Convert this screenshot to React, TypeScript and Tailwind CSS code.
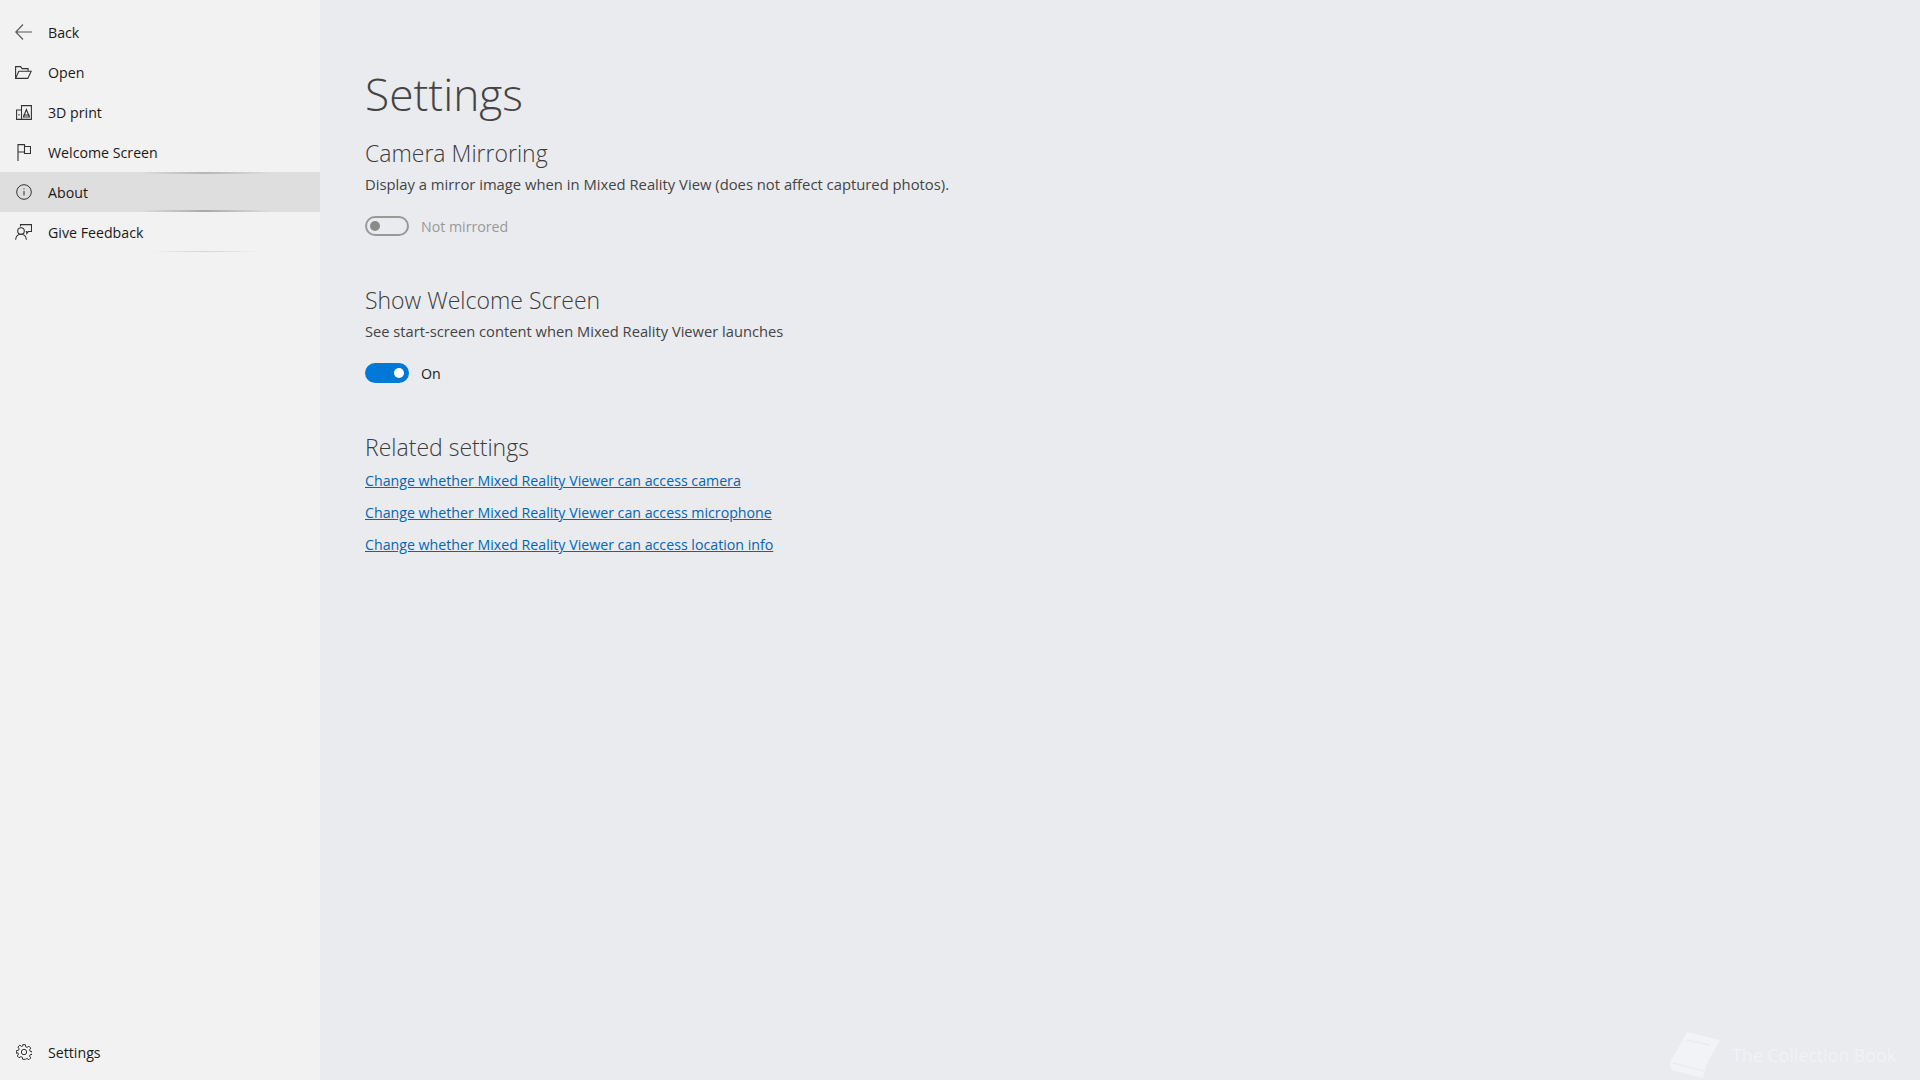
import React from "react";

const F = "font-['Open_Sans','Noto_Sans',sans-serif]";

const Back = () => (
  <svg width="18" height="16" viewBox="0 0 18 16" fill="none" stroke="#555" strokeWidth="1.1"><path d="M8 .5 .8 8 8 15.500M.8 8H17" /></svg>
);
const Open = () => (
  <svg width="17" height="13" viewBox="0 0 17 13" fill="none" stroke="#333" strokeWidth="1.1"><path d="M.6 12.400V.6h5l1.500 2h6v2.600M.6 12.400h12.200l3.400-7.200H3.800L.6 12.400Z" /></svg>
);
const Print = () => (
  <svg width="16" height="15" viewBox="0 0 16 15" fill="none" stroke="#333" strokeWidth="1.1"><path d="M5.500 5H.6v9.400h14.800V.6H5.500v13.800" /><path d="M10.400 4.500 7.400 12h6l-3-7.500Z" /><path d="M7.500 10h6" /><path d="M3 9v1.500" /></svg>
);
const Flag = () => (
  <svg width="14" height="17" viewBox="0 0 14 17" fill="none" stroke="#333" strokeWidth="1.1"><path d="M1 17V.6h6.500v1.900h6v7H7.500v-1.500H1M7.500 2.500V8" /></svg>
);
const Info = () => (
  <svg width="16" height="16" viewBox="0 0 16 16" fill="none" stroke="#333" strokeWidth="1"><circle cx="8" cy="8" r="7.300" /><path d="M8 7v4.500M8 4.400v1.100" /></svg>
);
const Feedback = () => (
  <svg width="17" height="16" viewBox="0 0 17 16" fill="none" stroke="#333" strokeWidth="1.1"><circle cx="6" cy="7" r="3.300" /><path d="M.6 15.800c.3-3.300 2.400-5.500 5.400-5.500s5.100 2.200 5.400 5.500" /><path d="M5.500 2.500V.6h11v6.900h-3l-1.700 2v-2h-1" /></svg>
);
const Gear = () => (
  <svg width="16" height="16" viewBox="0 0 24 24" fill="none" stroke="#333" strokeWidth="1.500" strokeLinejoin="round"><circle cx="12" cy="12" r="4" /><path d="M10 1h4l.6 3.200 2 .9 2.800-1.800 2.700 2.800-1.800 2.700.9 2.100 3.200.6v4l-3.200.6-.9 2 1.800 2.800-2.700 2.700-2.800-1.800-2 .9L14 23h-4l-.6-3.200-2-.9-2.800 1.800-2.700-2.700 1.800-2.800-.9-2L.6 14v-4l3.200-.6.9-2.100L2.900 4.600l2.700-2.800 2.800 1.800 2-.9L10 1Z" /></svg>
);

function NavRow({ icon, label, active, streak }: { icon: React.ReactNode; label: string; active?: boolean; streak?: boolean }) {
  return (
    <div className={`relative flex h-10 items-center ${active ? "bg-[#dedede]" : ""}`}>
      <div className="flex w-12 justify-center pr-[1px]"><div className="flex w-[18px] justify-center">{icon}</div></div>
      <span className="pt-[1px] text-[14.2px] text-[#1a1a1a]">{label}</span>
      {active && (
        <>
          <div className="absolute left-[140px] top-0 h-[2px] w-[130px] bg-gradient-to-r from-transparent via-[#b5b5b5] to-transparent" />
          <div className="absolute bottom-0 left-[140px] h-[2px] w-[130px] bg-gradient-to-r from-transparent via-[#a9a9a9] to-transparent" />
        </>
      )}
      {streak && (
        <div className="absolute bottom-0 left-[150px] h-[1px] w-[110px] bg-gradient-to-r from-transparent via-[#d4d4d4] to-transparent" />
      )}
    </div>
  );
}

function Heading({ children }: { children: React.ReactNode }) {
  return <h2 className="text-[23px] leading-8 font-light text-[#3c3c3c]">{children}</h2>;
}

function Toggle({ on }: { on: boolean }) {
  return (
    <div className={`flex h-5 w-11 items-center rounded-full ${on ? "justify-end bg-[#0078d7] px-[5px]" : "justify-start border-2 border-[#999] px-[3px]"}`}>
      <div className={`size-2.5 rounded-full ${on ? "bg-white" : "bg-[#8a8a8a]"}`} />
    </div>
  );
}

export default function App() {
  return (
    <div className={`relative flex h-[1080px] w-[1920px] overflow-hidden bg-[#e9ebef] ${F}`}>
      <aside className="flex w-[320px] shrink-0 flex-col justify-between bg-[#f2f2f2] pt-3 pb-2">
        <nav>
          <NavRow icon={<Back />} label="Back" />
          <NavRow icon={<Open />} label="Open" />
          <NavRow icon={<Print />} label="3D print" />
          <NavRow icon={<Flag />} label="Welcome Screen" />
          <NavRow icon={<Info />} label="About" active />
          <NavRow icon={<Feedback />} label="Give Feedback" streak />
        </nav>
        <NavRow icon={<Gear />} label="Settings" />
      </aside>
      <main className="pl-[45px] pt-[62px]">
        <h1 className="mb-[11px] text-[44.3px] leading-[64px] font-light text-[#444]">Settings</h1>
        <Heading>Camera Mirroring</Heading>
        <p className="mt-[3px] text-[14.8px] leading-6 text-[#444]">Display a mirror image when in Mixed Reality View (does not affect captured photos).</p>
        <div className="mt-[20px] flex h-5 items-center gap-3">
          <Toggle on={false} />
          <span className="pt-[1px] text-[14.2px] text-[#999]">Not mirrored</span>
        </div>
        <div className="mt-[48px]"><Heading>Show Welcome Screen</Heading></div>
        <p className="mt-[3px] text-[14.7px] leading-6 text-[#444]">See start-screen content when Mixed Reality Viewer launches</p>
        <div className="mt-[20px] flex h-5 items-center gap-3">
          <Toggle on />
          <span className="pt-[1px] text-[14.2px] text-[#222]">On</span>
        </div>
        <div className="mt-[48px]"><Heading>Related settings</Heading></div>
        <div className="mt-[2px] flex flex-col text-[14.2px] leading-8 text-[#0067b8]">
          <a className="underline">Change whether Mixed Reality Viewer can access camera</a>
          <a className="underline">Change whether Mixed Reality Viewer can access microphone</a>
          <a className="underline">Change whether Mixed Reality Viewer can access location info</a>
        </div>
      </main>
      <div className="absolute right-[24px] bottom-[2px] flex items-center gap-3 text-[17.8px] text-[#f1f2f5]">
        <svg width="50" height="46" viewBox="0 0 50 46">
          <path d="M17 0 50 8 37 31 33 46 2 38C-1 34 0 30 2 27L17 0Z" fill="#f2f3f6" />
          <path d="M17 8 40 13M3 31l31 8" stroke="#e9ebef" strokeWidth="1.500" fill="none" />
        </svg>
        <span>The Collection Book</span>
      </div>
    </div>
  );
}
